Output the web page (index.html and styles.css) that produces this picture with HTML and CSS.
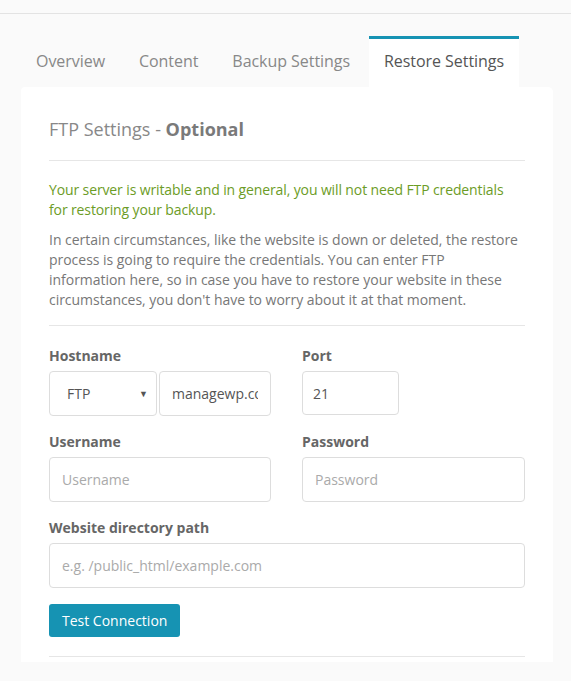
FILE: index.html
```html
<!DOCTYPE html>
<html>
<head>
<meta charset="utf-8">
<link rel="stylesheet" href="styles.css">
</head>
<body>
<div class="topbar"></div>
<div class="wrap">
  <nav class="tabs">
    <span class="tab">Overview</span>
    <span class="tab">Content</span>
    <span class="tab">Backup Settings</span>
    <span class="tab active">Restore Settings</span>
  </nav>
  <div class="card">
    <h2 class="title">FTP Settings - <b>Optional</b></h2>
    <hr class="rule">
    <p class="ok">Your server is writable and in general, you will not need FTP credentials for restoring your backup.</p>
    <p class="info">In certain circumstances, like the website is down or deleted, the restore process is going to require the credentials. You can enter FTP information here, so in case you have to restore your website in these circumstances, you don't have to worry about it at that moment.</p>
    <hr class="rule rule-form">
    <div class="row">
      <div class="group">
        <label class="label">Hostname</label>
        <div class="host">
          <div class="select">FTP<span class="caret">▼</span></div>
          <input class="input host-input" type="text" value="managewp.com">
        </div>
      </div>
      <div class="group">
        <label class="label">Port</label>
        <input class="input port" type="text" value="21">
      </div>
    </div>
    <div class="row">
      <div class="group">
        <label class="label">Username</label>
        <input class="input" type="text" placeholder="Username">
      </div>
      <div class="group">
        <label class="label">Password</label>
        <input class="input" type="password" placeholder="Password">
      </div>
    </div>
    <div class="group full">
      <label class="label">Website directory path</label>
      <input class="input" type="text" placeholder="e.g. /public_html/example.com">
    </div>
    <button class="btn">Test Connection</button>
    <hr class="rule rule-end">
  </div>
</div>
</body>
</html>
```
FILE: styles.css
```css
* { box-sizing: border-box; }
html, body { margin: 0; padding: 0; }
body {
  background: #fafafa;
  font-family: "Open Sans", "Liberation Sans", sans-serif;
  color: #777;
  height: 681px;
  overflow: hidden;
}
.topbar {
  height: 14px;
  border-bottom: 1px solid #e3e3e3;
}
.wrap {
  padding: 22px 18px 0 21px;
}
.tabs {
  display: flex;
  gap: 4px;
  height: 51px;
}
.tab {
  display: block;
  font-size: 16px;
  line-height: 22px;
  padding: 14px 15px 15px;
  color: #888;
  letter-spacing: -0.05px;
}
.tab.active {
  background: #fff;
  color: #555;
  border-top: 3px solid #1693b3;
  padding-top: 11px;
}
.card {
  background: #fff;
  width: 532px;
  height: 575px;
  padding: 30px 28px 0;
  border-top-left-radius: 4px;
  border-top-right-radius: 5px;
}
.title {
  margin: 0;
  font-size: 18px;
  line-height: 24px;
  font-weight: 400;
  color: #888;
}
.title b { font-weight: 700; color: #7a7a7a; }
.rule {
  border: 0;
  border-top: 1px solid #e6e6e6;
  margin: 19px 0 19px;
  height: 0;
}
.ok, .info {
  margin: 0;
  font-size: 14px;
  line-height: 20px;
}
.ok { color: #6c9c26; letter-spacing: -0.12px; }
.info { color: #777; margin-top: 10px; letter-spacing: -0.03px; }
.rule-form { margin: 15px 0 20px; }
.row {
  display: grid;
  grid-template-columns: 222px 223px;
  column-gap: 31px;
}
.group {
  display: flex;
  flex-direction: column;
  margin-bottom: 16px;
}
.label {
  font-size: 14px;
  line-height: 20px;
  font-weight: 700;
  color: #666;
  margin-bottom: 5px;
}
.input {
  height: 45px;
  border: 1px solid #ddd;
  border-radius: 4px;
  padding: 0 12px;
  font-family: inherit;
  font-size: 14px;
  color: #555;
  background: #fff;
  outline: none;
  width: 100%;
}
.input::placeholder { color: #aaa; }
.host {
  display: flex;
  gap: 2px;
}
.select {
  position: relative;
  width: 108px;
  flex: none;
  height: 45px;
  border: 1px solid #ddd;
  border-radius: 4px;
  padding: 0 17px;
  font-size: 14px;
  line-height: 43px;
  color: #555;
}
.caret {
  position: absolute;
  right: 8px;
  top: 0;
  font-size: 9px;
  color: #555;
}
.host-input { flex: 1; min-width: 0; }
.port { width: 97px; height: 44px; padding: 0 10px; }
.btn {
  display: block;
  height: 33px;
  padding: 0 13px;
  background: #1693b3;
  color: #fff;
  border: 0;
  border-radius: 3px;
  font-family: inherit;
  font-size: 14px;
}
.rule-end { margin: 19px 0 0; }
```
